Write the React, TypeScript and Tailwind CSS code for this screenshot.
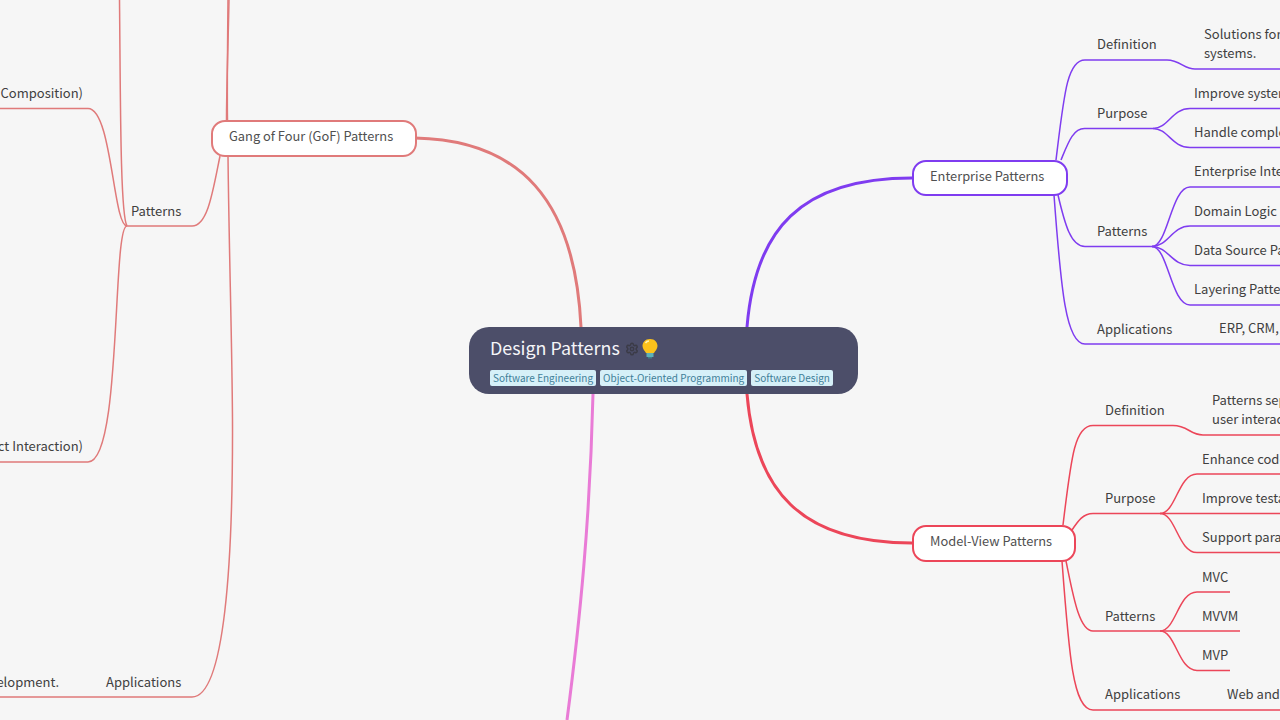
import { Settings } from 'lucide-react';

const labels = [
  { text: 'Definition', pos: 'left-[1097px] top-[34px]' },
  { text: 'Solutions for large-scale enterprise', pos: 'left-[1204px] top-[24px]' },
  { text: 'systems.', pos: 'left-[1204px] top-[43px]' },
  { text: 'Purpose', pos: 'left-[1097px] top-[103px]' },
  { text: 'Improve system architecture', pos: 'left-[1194px] top-[83px]' },
  { text: 'Handle complex business logic', pos: 'left-[1194px] top-[122px]' },
  { text: 'Patterns', pos: 'left-[1097px] top-[221px]' },
  { text: 'Enterprise Integration Patterns', pos: 'left-[1194px] top-[161px]' },
  { text: 'Domain Logic Patterns', pos: 'left-[1194px] top-[201px]' },
  { text: 'Data Source Patterns', pos: 'left-[1194px] top-[240px]' },
  { text: 'Layering Patterns', pos: 'left-[1194px] top-[279px]' },
  { text: 'Applications', pos: 'left-[1097px] top-[319px]' },
  { text: 'ERP, CRM, and more', pos: 'left-[1219px] top-[318px]' },

  { text: 'Definition', pos: 'left-[1105px] top-[400px]' },
  { text: 'Patterns separating data, display and', pos: 'left-[1212px] top-[390px]' },
  { text: 'user interaction.', pos: 'left-[1212px] top-[409px]' },
  { text: 'Purpose', pos: 'left-[1105px] top-[488px]' },
  { text: 'Enhance code organization', pos: 'left-[1202px] top-[449px]' },
  { text: 'Improve testability', pos: 'left-[1202px] top-[488px]' },
  { text: 'Support parallel work', pos: 'left-[1202px] top-[527px]' },
  { text: 'Patterns', pos: 'left-[1105px] top-[606px]' },
  { text: 'MVC', pos: 'left-[1202px] top-[567px]' },
  { text: 'MVVM', pos: 'left-[1202px] top-[606px]' },
  { text: 'MVP', pos: 'left-[1202px] top-[645px]' },
  { text: 'Applications', pos: 'left-[1105px] top-[684px]' },
  { text: 'Web and mobile applications', pos: 'left-[1227px] top-[684px]' },

  { text: 'Patterns', pos: 'left-[131px] top-[201px]' },
  { text: 'Applications', pos: 'left-[106px] top-[672px]' },
  { text: 'Structural (Object Composition)', pos: 'right-[1197px] top-[83px]' },
  { text: 'Behavioral (Object Interaction)', pos: 'right-[1197px] top-[436px]' },
  { text: 'Widely used in software development.', pos: 'right-[1221px] top-[672px]' },
];

const nodes = [
  { text: 'Gang of Four (GoF) Patterns', pos: 'left-[210.5px] top-[119.5px] w-[206px] h-[37px] pb-[4px] border-[#e07a7a]' },
  { text: 'Enterprise Patterns', pos: 'left-[911.5px] top-[159.5px] w-[156px] h-[36px] pb-[3px] border-[#7f3cf0]' },
  { text: 'Model-View Patterns', pos: 'left-[911.5px] top-[524.5px] w-[164px] h-[37px] pb-[4px] border-[#ec4659]' },
];

const tags = ['Software Engineering', 'Object-Oriented Programming', 'Software Design'];

const purpleLines = [
  'M1056 160 C1064 95 1067 60 1085 60 L1167 60 C1180 60 1184 69 1195 69 L1280 69',
  'M1061 160 C1068 143 1073 128 1085 128.500 L1153 128.500',
  'M1153 128.500 C1168 128.500 1172 108.500 1190 108.500 L1280 108.500',
  'M1153 128.500 C1168 128.500 1172 147.500 1190 147.500 L1280 147.500',
  'M1058 195 C1065 225 1071 246.500 1085 246.500 L1152 246.500',
  'M1152 246.500 C1168 246.500 1171 187 1190 187 L1280 187',
  'M1152 246.500 C1168 246.500 1172 226 1190 226 L1280 226',
  'M1152 246.500 C1168 246.500 1172 265.500 1190 265.500 L1280 265.500',
  'M1152 246.500 C1168 246.500 1171 305 1190 305 L1280 305',
  'M1054 195 C1061 290 1066 344 1085 344 L1280 344',
];

const redLines = [
  'M1063 525 C1071 460 1074 425.500 1093 425.500 L1173 425.500 C1188 425.500 1190 435 1203 435 L1280 435',
  'M1072 530 C1078 521 1083 513.500 1093 513.500 L1160 513.500',
  'M1160 513.500 C1176 513.500 1178 474 1197 474 L1280 474',
  'M1160 513.500 L1280 513.500',
  'M1160 513.500 C1176 513.500 1178 552.500 1197 552.500 L1280 552.500',
  'M1066 561 C1073 595 1079 631 1093 631 L1160 631',
  'M1160 631 C1176 631 1178 592 1197 592 L1230 592',
  'M1160 631 L1240 631',
  'M1160 631 C1176 631 1178 670.500 1197 670.500 L1230 670.500',
  'M1062 561 C1069 655 1073 710 1093 710 L1280 710',
];

const salmonLines = [
  'M220 156 C213 190 208 226 192 226 L127 226',
  'M127 226 C113 226 112 108.500 88 108.500 L0 108.500',
  'M127 226 C112 226 122 462 88 462 L0 462',
  'M119.500 0 C120.500 90 120 215 127 226',
  'M228 0 C227.500 50 227 90 227.500 120',
  'M229 0 C228 50 226.500 90 226.500 120',
  'M228 156 C229 250 232 340 232.500 420 C233 560 225 697 192 697 L0 697',
];

const App = () => {
  return (
    <div className="relative w-[1280px] h-[720px] overflow-hidden bg-[#f6f6f6] font-['Noto_Sans_CJK_SC',sans-serif] text-[13px] text-[#404040]">
      <svg className="absolute left-0 top-0" width="1280" height="720" fill="none">
        <path d="M415 138 C520 140 575 200 581 327" stroke="#e07a7a" strokeWidth="3" />
        <path d="M912 178 C800 178 755 230 747 327" stroke="#7f3cf0" strokeWidth="3" />
        <path d="M912 543 C800 543 755 490 747 394" stroke="#ec4659" strokeWidth="3" />
        <path d="M593 394 C590 520 580 620 567 720" stroke="#e97bd6" strokeWidth="3" />
        <g stroke="#7f3cf0" strokeWidth="1.500">
          {purpleLines.map((d) => (
            <path key={d} d={d} />
          ))}
        </g>
        <g stroke="#ec4659" strokeWidth="1.500">
          {redLines.map((d) => (
            <path key={d} d={d} />
          ))}
        </g>
        <g stroke="#e07a7a" strokeWidth="1.500">
          {salmonLines.map((d) => (
            <path key={d} d={d} />
          ))}
        </g>
      </svg>

      {labels.map((l) => (
        <div key={l.text + l.pos} className={`absolute h-[20px] leading-[20px] whitespace-nowrap ${l.pos}`}>
          {l.text}
        </div>
      ))}

      {nodes.map((n) => (
        <div
          key={n.text}
          className={`absolute flex items-center pl-[16.5px] bg-white border-[2.5px] rounded-[14px] text-[12.85px] whitespace-nowrap text-[#505050] ${n.pos}`}
        >
          {n.text}
        </div>
      ))}

      <div className="absolute left-[469px] top-[327px] w-[389px] h-[67px] rounded-[20px] bg-[#4c4e69] pl-[21px] pt-[7px]">
        <div className="flex items-center h-[26px]">
          <span className="text-[17.9px] leading-[26px] text-[#f5f5f8]">Design Patterns</span>
          <Settings className="ml-[5px] mt-[4px] text-[#3b3b47]" size={14} strokeWidth={2.500} />
          <svg className="ml-[1px] mt-[2px]" width="20" height="21" viewBox="0 0 20 21">
            <path d="M10 1 C5 1 2.500 4.500 2.500 8 C2.500 11 5 13 6 15 L14 15 C15 13 17.500 11 17.500 8 C17.500 4.500 15 1 10 1 Z" fill="#fcc21b" />
            <path d="M5.500 5 C6.500 3.500 8 3 9 3" stroke="#fff3b0" strokeWidth="1.500" fill="none" />
            <rect x="6.500" y="15" width="7" height="4" fill="#5fb0b7" />
            <rect x="8" y="19" width="4" height="1.500" fill="#3e7f88" />
          </svg>
        </div>
        <div className="flex gap-[4px] mt-[10px]">
          {tags.map((t) => (
            <span
              key={t}
              className="h-[16px] px-[3px] rounded-[2px] bg-[#d6f0f8] text-[10px] leading-[16px] text-[#3f7f99] whitespace-nowrap"
            >
              {t}
            </span>
          ))}
        </div>
      </div>
    </div>
  );
};

export default App;
